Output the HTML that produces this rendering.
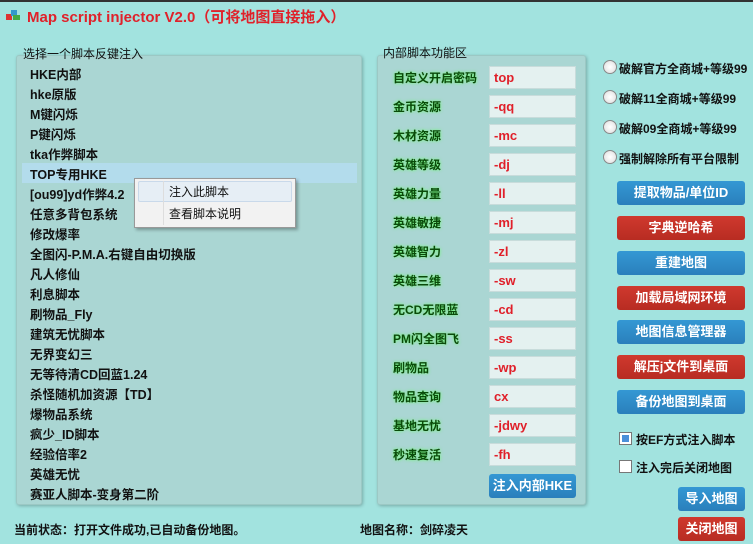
<!DOCTYPE html>
<html><head><meta charset="utf-8"><style>
*{margin:0;padding:0;box-sizing:border-box}
body{width:753px;height:544px;overflow:hidden;background:#a2e3df;font-family:"Liberation Sans","Noto Sans CJK SC",sans-serif;position:relative;font-size:12px;color:#111}
.a{position:absolute;white-space:nowrap}
.title{left:27px;top:6px;font-size:15px;font-weight:bold;color:#e0212a}
.panel{position:absolute;background:#aad6d3;border:1px solid #9cc8c4;box-shadow:1px 1px 3px rgba(0,0,0,.25);border-radius:3px}
.item{position:absolute;left:30px;font-size:12.5px;font-weight:bold;color:#111}
.lab{position:absolute;left:393px;font-size:12px;font-weight:bold;color:#0a4a0a;text-shadow:0 0 3px #6f6}
.inp{position:absolute;left:489px;width:87px;height:23px;background:#e4f1f0;border:1px solid #c8dcdb;color:#e0202a;font-weight:bold;font-size:13px;padding:0 4px;line-height:21px}
.btn{position:absolute;color:#fff;font-weight:bold;font-size:13px;text-align:center;border-radius:3px;line-height:23px;height:24px}
.bl{background:linear-gradient(#3498d4,#2a7fbc)}
.rd{background:linear-gradient(#d0392e,#b82c22)}
.radio{position:absolute;left:603px;width:14px;height:14px;border-radius:50%;background:radial-gradient(#fff,#ddd);border:1px solid #888}
.rt{position:absolute;left:619px;font-weight:bold;font-size:12px}
</style></head><body>
<div class="a" style="left:0;top:0;width:753px;height:2px;background:#333"></div>
<div class="a" style="left:6px;top:10px;width:14px;height:10px">
<div class="a" style="left:0;top:4px;width:6px;height:6px;background:#d33"></div>
<div class="a" style="left:5px;top:0;width:6px;height:6px;background:#39c"></div>
<div class="a" style="left:7px;top:5px;width:7px;height:5px;background:#4a4"></div></div>
<div class="a title">Map script injector V2.0（可将地图直接拖入）</div>

<div class="panel" style="left:16px;top:55px;width:346px;height:450px"></div>
<div class="a" style="left:23px;top:45px;font-size:12px">选择一个脚本反键注入</div>
<div class="a" style="left:22px;top:163px;width:335px;height:20px;background:#b3dcec"></div>
<div class="item" style="top:64px">HKE内部</div>
<div class="item" style="top:84px">hke原版</div>
<div class="item" style="top:104px">M键闪烁</div>
<div class="item" style="top:124px">P键闪烁</div>
<div class="item" style="top:144px">tka作弊脚本</div>
<div class="item" style="top:164px">TOP专用HKE</div>
<div class="item" style="top:184px">[ou99]yd作弊4.2</div>
<div class="item" style="top:204px">任意多背包系统</div>
<div class="item" style="top:224px">修改爆率</div>
<div class="item" style="top:244px">全图闪-P.M.A.右键自由切换版</div>
<div class="item" style="top:264px">凡人修仙</div>
<div class="item" style="top:284px">利息脚本</div>
<div class="item" style="top:304px">刷物品_Fly</div>
<div class="item" style="top:324px">建筑无忧脚本</div>
<div class="item" style="top:344px">无界变幻三</div>
<div class="item" style="top:364px">无等待清CD回蓝1.24</div>
<div class="item" style="top:384px">杀怪随机加资源【TD】</div>
<div class="item" style="top:404px">爆物品系统</div>
<div class="item" style="top:424px">疯少_ID脚本</div>
<div class="item" style="top:444px">经验倍率2</div>
<div class="item" style="top:464px">英雄无忧</div>
<div class="item" style="top:484px">赛亚人脚本-变身第二阶</div>

<div class="a" style="left:134px;top:178px;width:162px;height:50px;background:#f2f2f2;border:1px solid #999;box-shadow:2px 2px 3px rgba(0,0,0,.3)"></div>
<div class="a" style="left:138px;top:181px;width:154px;height:21px;background:#e6eef5;border:1px solid #c9d9ea;border-radius:2px"></div>
<div class="a" style="left:163px;top:181px;width:1px;height:44px;background:#ddd"></div>
<div class="a" style="left:169px;top:183px;font-size:12px">注入此脚本</div>
<div class="a" style="left:169px;top:205px;font-size:12px">查看脚本说明</div>

<div class="panel" style="left:377px;top:55px;width:209px;height:450px"></div>
<div class="a" style="left:383px;top:44px;font-size:12px">内部脚本功能区</div>
<div class="lab" style="top:69px">自定义开启密码</div><div class="inp" style="top:66px">top</div>
<div class="lab" style="top:98px">金币资源</div><div class="inp" style="top:95px">-qq</div>
<div class="lab" style="top:127px">木材资源</div><div class="inp" style="top:124px">-mc</div>
<div class="lab" style="top:156px">英雄等级</div><div class="inp" style="top:153px">-dj</div>
<div class="lab" style="top:185px">英雄力量</div><div class="inp" style="top:182px">-ll</div>
<div class="lab" style="top:214px">英雄敏捷</div><div class="inp" style="top:211px">-mj</div>
<div class="lab" style="top:243px">英雄智力</div><div class="inp" style="top:240px">-zl</div>
<div class="lab" style="top:272px">英雄三维</div><div class="inp" style="top:269px">-sw</div>
<div class="lab" style="top:301px">无CD无限蓝</div><div class="inp" style="top:298px">-cd</div>
<div class="lab" style="top:330px">PM闪全图飞</div><div class="inp" style="top:327px">-ss</div>
<div class="lab" style="top:359px">刷物品</div><div class="inp" style="top:356px">-wp</div>
<div class="lab" style="top:388px">物品查询</div><div class="inp" style="top:385px">cx</div>
<div class="lab" style="top:417px">基地无忧</div><div class="inp" style="top:414px">-jdwy</div>
<div class="lab" style="top:446px">秒速复活</div><div class="inp" style="top:443px">-fh</div>
<div class="btn bl" style="left:489px;top:474px;width:87px">注入内部HKE</div>

<div class="radio" style="top:60px"></div><div class="rt" style="top:60px">破解官方全商城+等级99</div>
<div class="radio" style="top:90px"></div><div class="rt" style="top:90px">破解11全商城+等级99</div>
<div class="radio" style="top:120px"></div><div class="rt" style="top:120px">破解09全商城+等级99</div>
<div class="radio" style="top:150px"></div><div class="rt" style="top:150px">强制解除所有平台限制</div>

<div class="btn bl" style="left:617px;top:181px;width:128px">提取物品/单位ID</div>
<div class="btn rd" style="left:617px;top:216px;width:128px">字典逆哈希</div>
<div class="btn bl" style="left:617px;top:251px;width:128px">重建地图</div>
<div class="btn rd" style="left:617px;top:286px;width:128px">加载局域网环境</div>
<div class="btn bl" style="left:617px;top:320px;width:128px">地图信息管理器</div>
<div class="btn rd" style="left:617px;top:355px;width:128px">解压j文件到桌面</div>
<div class="btn bl" style="left:617px;top:390px;width:128px">备份地图到桌面</div>

<div class="a" style="left:619px;top:432px;width:13px;height:13px;background:#fff;border:1px solid #777"><div style="margin:2px;width:7px;height:7px;background:#4a90d9"></div></div>
<div class="rt" style="left:636px;top:431px">按EF方式注入脚本</div>
<div class="a" style="left:619px;top:460px;width:13px;height:13px;background:#fff;border:1px solid #777"></div>
<div class="rt" style="left:636px;top:459px">注入完后关闭地图</div>

<div class="btn bl" style="left:678px;top:487px;width:67px">导入地图</div>
<div class="btn rd" style="left:678px;top:517px;width:67px">关闭地图</div>

<div class="a" style="left:14px;top:521px;font-weight:bold">当前状态：打开文件成功,已自动备份地图。</div>
<div class="a" style="left:360px;top:521px;font-weight:bold">地图名称：剑碎凌天</div>
</body></html>
